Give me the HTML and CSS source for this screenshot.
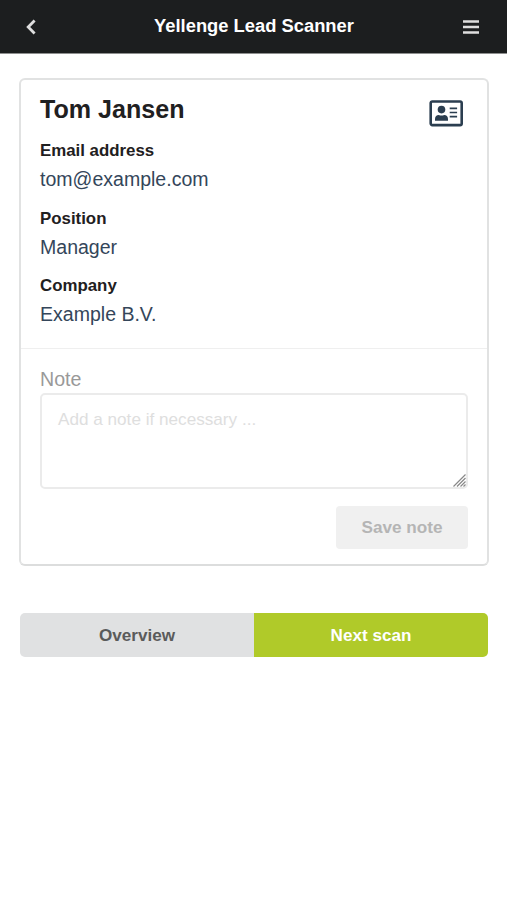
FILE: index.html
```html
<!DOCTYPE html>
<html lang="en">
<head>
<meta charset="utf-8">
<title>Yellenge Lead Scanner</title>
<link rel="stylesheet" href="styles.css">
</head>
<body>
<header class="topbar">
  <svg class="back" viewBox="0 0 10 16" aria-hidden="true"><path d="M8.600 1.500 2.200 8l6.400 6.500"/></svg>
  <h1 class="title">Yellenge Lead Scanner</h1>
  <svg class="menu" viewBox="0 0 16 14" aria-hidden="true"><path d="M0 1.500h16M0 7h16M0 12.500h16"/></svg>
</header>
<main class="page">
  <section class="card">
    <div class="lead">
      <dl class="details">
        <dt class="name">Tom Jansen</dt>
        <dt class="label">Email address</dt>
        <dd class="value">tom@example.com</dd>
        <dt class="label">Position</dt>
        <dd class="value">Manager</dd>
        <dt class="label">Company</dt>
        <dd class="value">Example B.V.</dd>
      </dl>
      <svg class="idcard" viewBox="0 0 34 27" aria-hidden="true">
        <rect class="frame" x="1.700" y="1.500" width="31" height="23.600" rx="1.600"/>
        <circle cx="12.500" cy="9.600" r="3.800"/>
        <path d="M6 20.700v-1.700c0-2.600 1.600-4 3.800-4 1.800.8 3.600.8 5.400 0 2.200 0 3.800 1.400 3.800 4v1.700z"/>
        <path class="lines" d="M20.700 8.400h7.400M20.700 12.500h7.400M20.700 16.600h7.400"/>
      </svg>
    </div>
    <form class="note">
      <label class="note-label" for="note">Note</label>
      <div class="field">
        <textarea class="input" id="note" placeholder="Add a note if necessary ..."></textarea>
        <svg class="grip" viewBox="0 0 13 13" aria-hidden="true"><path d="M.5 12.500l12-12M4 12.500l8.500-8.500M7.500 12.500l5-5M10.500 12.500l2-2"/></svg>
      </div>
      <button class="save" type="button" disabled>Save note</button>
    </form>
  </section>
  <nav class="actions">
    <button class="action" type="button">Overview</button>
    <button class="action primary" type="button">Next scan</button>
  </nav>
</main>
</body>
</html>
```

FILE: styles.css
```css
* { box-sizing: border-box; }
body {
  margin: 0;
  background: #fff;
  color: #1f2021;
  font-family: "Liberation Sans", Arial, sans-serif;
}
.topbar {
  display: grid;
  grid-template-columns: 16px 1fr 16px;
  align-items: center;
  height: 54px;
  padding: 0 28px 0 26px;
  border-bottom: 1px solid #8e8f8f;
  background: #1c1e1f;
  background-clip: padding-box;
}
.back { width: 10px; height: 16px; fill: none; stroke: #dedede; stroke-width: 2.8; }
.menu { width: 16px; height: 14px; fill: none; stroke: #dedede; stroke-width: 2.600; }
.title {
  margin: 0 0 2px;
  padding-left: 3px;
  color: #fff;
  font-size: 18.350px;
  line-height: 24px;
  text-align: center;
}
.page { padding: 24px 18px 0 19px; }
.card {
  height: 488px;
  border: 2px solid #e1e2e2;
  border-bottom-color: #dcdddd;
  border-radius: 6px;
}
.lead {
  display: flex;
  justify-content: space-between;
  height: 269px;
  padding: 15px 24px 0 19px;
  border-bottom: 1px solid #efefef;
}
.details { margin: 0; }
.name { margin-bottom: 16px; font-size: 25.100px; font-weight: bold; line-height: 28px; }
.label { font-size: 16.850px; font-weight: bold; line-height: 24px; }
.value { margin: 2px 0 13.500px; color: #34465a; font-size: 19.550px; line-height: 28px; }
.idcard { width: 34px; height: 27px; margin-top: 5px; fill: #2b3e50; }
.frame { fill: none; stroke: #2b3e50; stroke-width: 2.600; }
.lines { stroke: #2b3e50; stroke-width: 1.700; }
.note {
  display: flex;
  flex-direction: column;
  padding: 18px 19px 0;
}
.note-label { color: #999; font-size: 19.600px; line-height: 24px; }
.field { position: relative; height: 96px; margin-top: 2px; }
.input {
  display: block;
  width: 100%;
  height: 96px;
  padding: 12px 16px;
  border: 2px solid #ebebeb;
  border-radius: 5px;
  background: #fff;
  font: 17.150px/24px "Liberation Sans", Arial, sans-serif;
  resize: none;
}
.input::placeholder { color: #dedede; opacity: 1; }
.grip {
  position: absolute;
  right: 2px;
  bottom: 2px;
  width: 13px;
  height: 13px;
  fill: none;
  stroke: #888;
  stroke-width: 1.200;
}
.save {
  align-self: flex-end;
  width: 132px;
  height: 43px;
  margin-top: 17px;
  padding: 0;
  border: 0;
  border-radius: 4px;
  background: #f0f0f0;
  color: #b5b5b5;
  font: bold 17.150px "Liberation Sans", Arial, sans-serif;
}
.actions {
  display: flex;
  height: 44px;
  margin: 47px 1px 0;
  border-radius: 5px;
  overflow: hidden;
}
.action {
  flex: 1;
  padding: 1px 0 0;
  border: 0;
  background: #e0e1e2;
  color: #5b5b5b;
  font: bold 17.100px "Liberation Sans", Arial, sans-serif;
}
.primary { background: #b0ca29; color: #fff; }
```
